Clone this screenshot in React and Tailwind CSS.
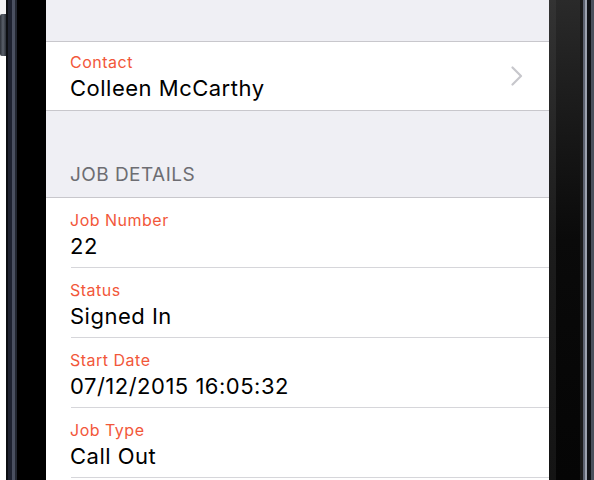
import React from 'react';

const jobFields = [
  { label: 'Job Number', value: '22' },
  { label: 'Status', value: 'Signed In' },
  { label: 'Start Date', value: '07/12/2015 16:05:32' },
  { label: 'Job Type', value: 'Call Out' },
];

const Chevron = () => (
  <svg width="12" height="20" viewBox="0 0 12 20" fill="none" className="shrink-0">
    <polyline points="1.5,1.5 10,10 1.5,18.5" stroke="#c7c7cc" strokeWidth="2.2" strokeLinecap="round" strokeLinejoin="round" />
  </svg>
);

const Field = ({ label, value }) => (
  <div className="flex flex-col">
    <span className="text-[16px] leading-[20px] tracking-[0.5px] text-[#f2573a]">{label}</span>
    <span className="mt-[3px] text-[22px] leading-[26px] tracking-[0.5px] text-black">{value}</span>
  </div>
);

const LeftFrame = () => (
  <div className="flex h-full w-[46px] shrink-0">
    {/* side button */}
    <div className="flex w-[6px] flex-col">
      <div className="h-[14px] bg-[#f2f2f4]" />
      <div className="h-[42px] rounded-l-[2px] bg-gradient-to-r from-[#2b3038] via-[#5b616c] to-[#2b3038]" />
      <div className="flex-1 bg-white" />
    </div>
    <div className="w-[2px] bg-[#0c0e12]" />
    <div className="w-[4px] bg-[#1e2230]" />
    <div className="w-[3px] bg-[#4a5060]" />
    <div className="w-[2px] bg-[#222630]" />
    <div className="flex-1 bg-black" />
  </div>
);

const RightFrame = () => (
  <div className="flex h-full w-[45px] shrink-0">
    <div className="w-[7px] bg-gradient-to-b from-[#333333] via-[#1c1c1c] to-[#141414]" />
    <div className="w-[24px] bg-gradient-to-b from-[#2a2a2a] via-[#0a0a0a] to-[#050505]" />
    <div className="w-[3px] bg-[#1a1a1a]" />
    <div className="w-[2px] bg-[#5c6270]" />
    <div className="w-[2px] bg-[#9ca2ae]" />
    <div className="w-[4px] bg-[#101216]" />
    <div className="w-[3px] bg-[#4a505c]" />
  </div>
);

export default function App() {
  return (
    <div
      className="flex h-[480px] w-[594px] overflow-hidden bg-white"
      style={{ fontFamily: 'Inter, "Liberation Sans", sans-serif' }}
    >
      <LeftFrame />

      {/* Screen */}
      <div className="flex min-w-0 flex-1 flex-col bg-[#efeff4]">
        <div className="h-[41px] shrink-0" />

        {/* Contact row */}
        <div className="flex h-[70px] shrink-0 items-center border-y border-[#c8c7cc] bg-white pl-[24px] pr-[26px]">
          <div className="flex-1">
            <Field label="Contact" value="Colleen McCarthy" />
          </div>
          <Chevron />
        </div>

        {/* Section header */}
        <div className="shrink-0 pl-[24px] pt-[52px] pb-[10px] text-[19px] leading-[24px] tracking-[0.45px] text-[#6d6d72]">
          JOB DETAILS
        </div>

        {/* Job details */}
        <div className="flex-1 border-t border-[#c8c7cc] bg-white">
          {jobFields.map((f) => (
            <div key={f.label} className="pl-[24px]">
              <div className="h-[69px] pt-[12px]">
                <Field label={f.label} value={f.value} />
              </div>
              <div className="ml-[1px] h-px bg-[#d6d6da]" />
            </div>
          ))}
        </div>
      </div>

      <RightFrame />
    </div>
  );
}
